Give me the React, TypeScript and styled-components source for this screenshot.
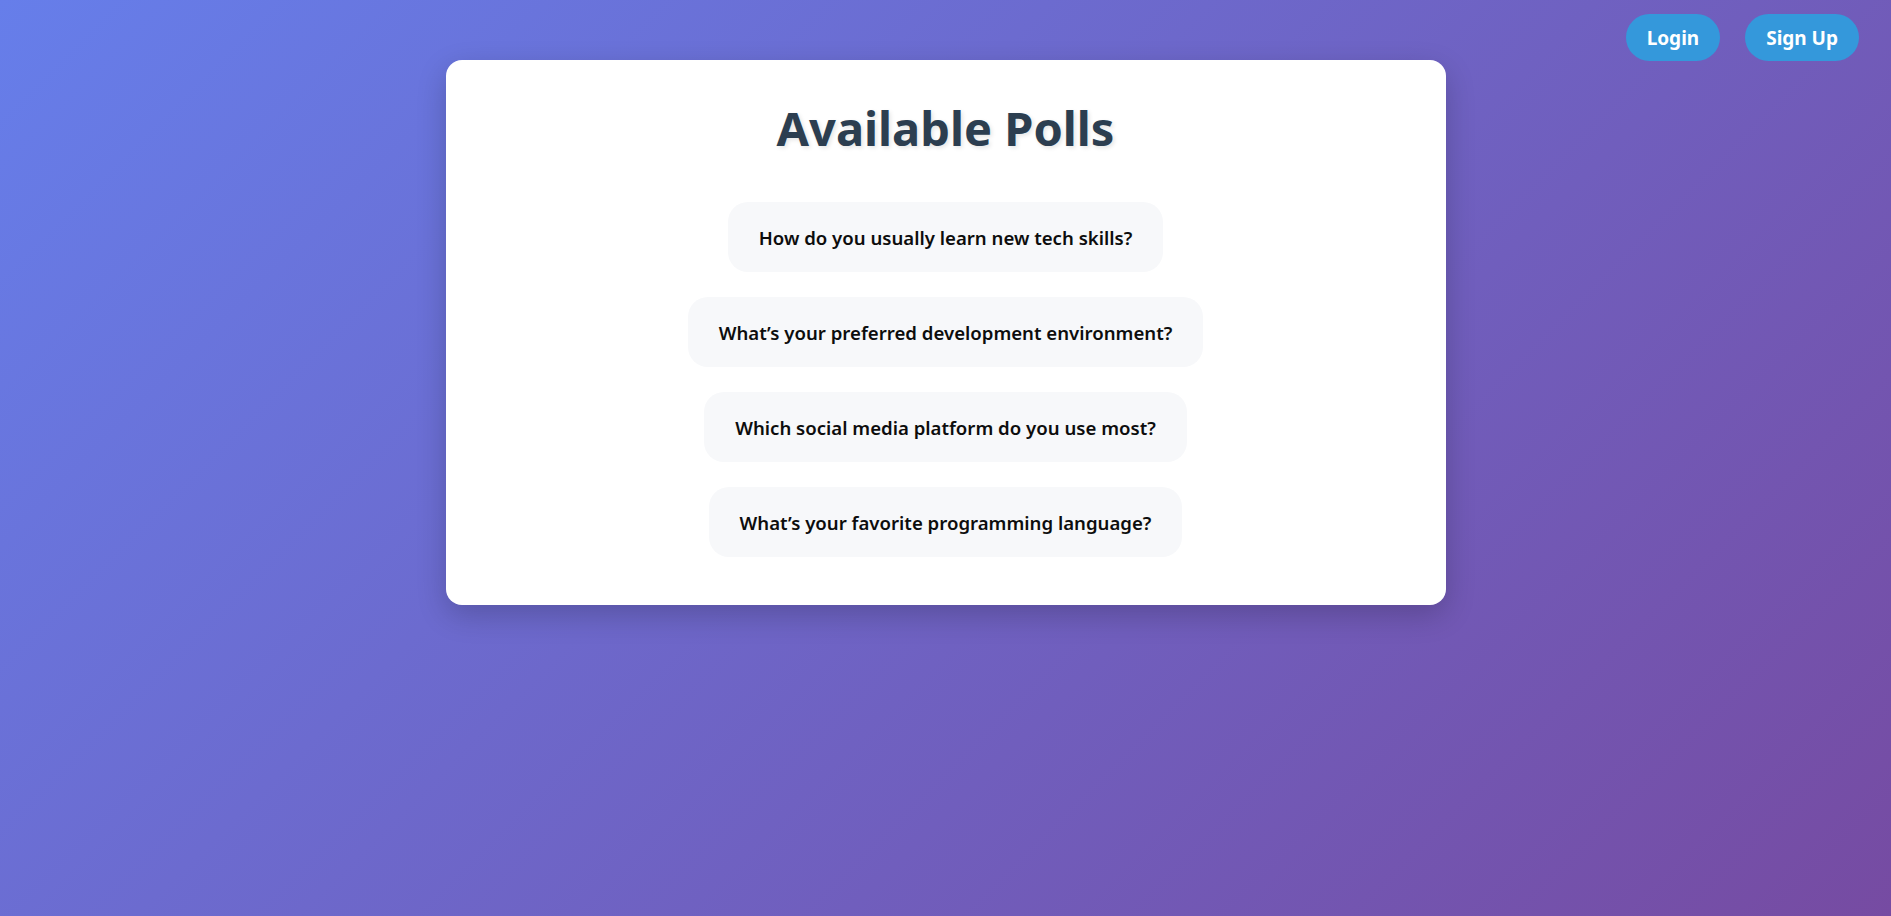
import React from "react";
import styled, { createGlobalStyle } from "styled-components";

const GlobalStyle = createGlobalStyle`
  html, body {
    margin: 0;
    padding: 0;
  }
  body {
    font-family: "Noto Sans", "Open Sans", sans-serif;
    background: linear-gradient(135deg, #667eea 0%, #764ba2 100%);
    min-height: 100vh;
  }
`;

const Page = styled.div`
  min-height: 100vh;
  display: flex;
  flex-direction: column;
  align-items: center;
  padding-top: 60px;
  box-sizing: border-box;
`;

const AuthBar = styled.nav`
  position: fixed;
  top: 14px;
  right: 32px;
  display: flex;
  gap: 25px;
`;

const AuthButton = styled.button`
  height: 47px;
  padding: 0 21px;
  border: none;
  border-radius: 24px;
  background: #3498db;
  color: #ffffff;
  font-family: "Noto Sans", sans-serif;
  font-weight: 700;
  font-size: 19px;
  cursor: pointer;
`;

const Card = styled.main`
  width: 1000px;
  box-sizing: border-box;
  background: #ffffff;
  border-radius: 16px;
  box-shadow: 0 10px 30px rgba(0, 0, 0, 0.2);
  padding: 36px 40px 48px;
  display: flex;
  flex-direction: column;
  align-items: center;
`;

const Title = styled.h1`
  margin: 0 0 42px;
  font-family: "Noto Sans", sans-serif;
  font-weight: 700;
  font-size: 47px;
  line-height: 64px;
  color: #2c3e50;
  text-shadow: 2px 2px 4px rgba(0, 0, 0, 0.1);
`;

const PollList = styled.ul`
  list-style: none;
  margin: 0;
  padding: 0;
  display: flex;
  flex-direction: column;
  align-items: center;
  gap: 25px;
`;

const PollItem = styled.li`
  height: 70px;
  box-sizing: border-box;
  padding: 0 31px;
  display: flex;
  align-items: center;
  background: #f7f8fa;
  border-radius: 20px;
  font-family: "Noto Sans", sans-serif;
  font-weight: 600;
  font-size: 18.6px;
  color: #0d0d0d;
  cursor: pointer;
`;

const polls = [
  "How do you usually learn new tech skills?",
  "What\u2019s your preferred development environment?",
  "Which social media platform do you use most?",
  "What\u2019s your favorite programming language?",
];

export default function App() {
  return (
    <>
      <GlobalStyle />
      <AuthBar>
        <AuthButton>Login</AuthButton>
        <AuthButton>Sign Up</AuthButton>
      </AuthBar>
      <Page>
        <Card>
          <Title>Available Polls</Title>
          <PollList>
            {polls.map((p) => (
              <PollItem key={p}>{p}</PollItem>
            ))}
          </PollList>
        </Card>
      </Page>
    </>
  );
}
